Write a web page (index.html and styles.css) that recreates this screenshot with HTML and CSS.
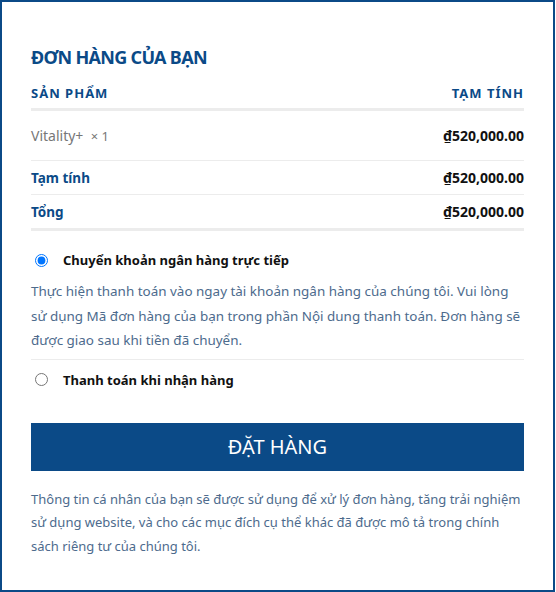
FILE: index.html
```html
<!DOCTYPE html>
<html>
<head>
  <meta charset="UTF-8">
  <title>Đơn hàng của bạn</title>
  <link rel="stylesheet" href="styles.css">
</head>
<body>
  <div class="order-box">
    <h3 class="order-title">Đơn hàng của bạn</h3>

    <table class="order-table">
      <thead>
        <tr>
          <th class="col-name">Sản phẩm</th>
          <th class="col-total">Tạm tính</th>
        </tr>
      </thead>
      <tbody>
        <tr class="item-row">
          <td class="col-name">Vitality+&nbsp; <span class="qty">× 1</span></td>
          <td class="col-total"><span class="amount">₫520,000.00</span></td>
        </tr>
      </tbody>
      <tfoot>
        <tr class="subtotal-row">
          <th class="col-name">Tạm tính</th>
          <td class="col-total"><span class="amount">₫520,000.00</span></td>
        </tr>
        <tr class="total-row">
          <th class="col-name">Tổng</th>
          <td class="col-total"><span class="amount">₫520,000.00</span></td>
        </tr>
      </tfoot>
    </table>

    <ul class="payment-methods">
      <li class="method">
        <label class="method-label">
          <input type="radio" name="payment" checked>
          <span>Chuyển khoản ngân hàng trực tiếp</span>
        </label>
        <p class="method-desc">Thực hiện thanh toán vào ngay tài khoản ngân hàng của chúng tôi. Vui lòng sử dụng Mã đơn hàng của bạn trong phần Nội dung thanh toán. Đơn hàng sẽ được giao sau khi tiền đã chuyển.</p>
      </li>
      <li class="method">
        <label class="method-label">
          <input type="radio" name="payment">
          <span>Thanh toán khi nhận hàng</span>
        </label>
      </li>
    </ul>

    <button class="place-order">Đặt hàng</button>

    <p class="privacy-note">Thông tin cá nhân của bạn sẽ được sử dụng để xử lý đơn hàng, tăng trải nghiệm sử dụng website, và cho các mục đích cụ thể khác đã được mô tả trong chính sách riêng tư của chúng tôi.</p>
  </div>
</body>
</html>
```

FILE: styles.css
```css
body {
  margin: 0;
  background: #fff;
  font-family: "Noto Sans", "Open Sans", sans-serif;
  color: #222;
}

.order-box {
  box-sizing: border-box;
  width: 555px;
  height: 592px;
  border: 2px solid #0b4a87;
  padding: 42px 29px 0 29px;
}

.order-title {
  margin: 0 0 14px;
  font-size: 18px;
  line-height: 26px;
  font-weight: 700;
  text-transform: uppercase;
  letter-spacing: -0.7px;
  color: #0b4a87;
}

.order-table {
  width: 100%;
  border-collapse: collapse;
  font-size: 13px;
}

.order-table th,
.order-table td {
  padding: 0;
  text-align: left;
}

.order-table .col-total {
  text-align: right;
}

.order-table thead th {
  height: 24px;
  padding-bottom: 0;
  vertical-align: top;
  font-size: 13px;
  font-weight: 700;
  letter-spacing: 1px;
  text-transform: uppercase;
  color: #0b4a87;
  border-bottom: 3px solid #ececec;
}

.item-row td {
  height: 49px;
  font-size: 14px;
  color: #777;
  border-bottom: 1px solid #ececec;
}

.qty {
  font-size: 13px;
}

.amount {
  font-size: 14px;
  font-weight: 700;
  color: #111;
}

.subtotal-row th,
.subtotal-row td,
.total-row th,
.total-row td {
  height: 33px;
  font-size: 13.5px;
  font-weight: 700;
  color: #0b4a87;
}

.subtotal-row th,
.subtotal-row td {
  border-bottom: 1px solid #ececec;
}

.total-row th,
.total-row td {
  border-bottom: 3px solid #ececec;
}

.payment-methods {
  list-style: none;
  margin: 18px 0 0;
  padding: 0;
}

.method + .method {
  border-top: 1px solid #ececec;
}

.method-label {
  display: flex;
  align-items: center;
  gap: 15px;
  height: 22px;
  padding-left: 4px;
  font-size: 13px;
  font-weight: 700;
  color: #111;
}

.method-label input {
  margin: 0;
}

.method + .method .method-label {
  margin-top: 9px;
}

.method-desc {
  margin: 8px 0 6px;
  font-size: 13.45px;
  line-height: 24.5px;
  color: #4d6b8d;
}

.place-order {
  display: block;
  width: 100%;
  height: 48px;
  margin-top: 32px;
  border: 0;
  background: #0b4a87;
  color: #fff;
  font-family: inherit;
  font-size: 20px;
  text-transform: uppercase;
}

.privacy-note {
  margin: 17px 0 0;
  font-size: 13px;
  line-height: 23.5px;
  color: #4d6b8d;
}
```
